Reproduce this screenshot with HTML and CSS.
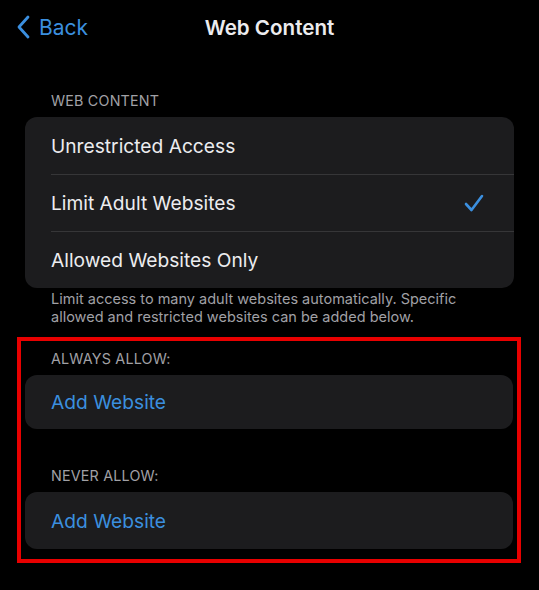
FILE: index.html
```html
<!DOCTYPE html>
<html>
<head>
<meta charset="utf-8">
<link rel="stylesheet" href="styles.css">
</head>
<body>
<div class="nav">
  <div class="back">
    <svg class="chev" width="14" height="24" viewBox="0 0 14 24"><path d="M12 2 L3 12 L12 22" fill="none" stroke="#3b8fdf" stroke-width="2.8" stroke-linecap="round" stroke-linejoin="round"/></svg>
    <span>Back</span>
  </div>
  <div class="title">Web Content</div>
</div>

<div class="sec-head first">WEB CONTENT</div>
<div class="card">
  <div class="row"><span>Unrestricted Access</span></div>
  <div class="row"><span>Limit Adult Websites</span>
    <svg class="check" width="20" height="18" viewBox="0 0 20 18"><path d="M2 10 L7.5 16 L18 2" fill="none" stroke="#3b8fdf" stroke-width="2.6" stroke-linecap="round" stroke-linejoin="round"/></svg>
  </div>
  <div class="row"><span>Allowed Websites Only</span></div>
</div>
<div class="foot">Limit access to many adult websites automatically. Specific allowed and restricted websites can be added below.</div>

<div class="highlight">
  <div class="sec-head">ALWAYS ALLOW:</div>
  <div class="card"><div class="row link short">Add Website</div></div>
  <div class="sec-head never">NEVER ALLOW:</div>
  <div class="card"><div class="row link">Add Website</div></div>
</div>
</body>
</html>
```

FILE: styles.css
```css
* { box-sizing: border-box; }
html, body { margin: 0; padding: 0; background: #000; }
body {
  font-family: Inter, "Noto Sans", sans-serif;
  color: #ececef;
  width: 539px;
  height: 590px;
  overflow: hidden;
}
.nav {
  position: relative;
  height: 54px;
  display: flex;
  align-items: center;
}
.back {
  display: flex;
  align-items: center;
  gap: 9px;
  padding-left: 16px;
  color: #3b8fdf;
  font-size: 21px;
}
.chev { display: block; }
.title {
  position: absolute;
  left: 0; right: 0; top: 0; bottom: 0;
  display: flex;
  align-items: center;
  justify-content: center;
  font-size: 20.6px;
  font-weight: 600;
  pointer-events: none;
}
.sec-head {
  font-size: 14.3px;
  color: #a1a1a6;
  padding-left: 51px;
  letter-spacing: 0.2px;
}
.sec-head.first { margin-top: 38px; height: 25px; }
.card {
  margin: 0 25px;
  background: #1c1c1e;
  border-radius: 12px;
  overflow: hidden;
}
.row {
  height: 57px;
  display: flex;
  align-items: center;
  justify-content: space-between;
  padding: 0 30px 0 26px;
  font-size: 19.2px;
  position: relative;
}
.row + .row::before {
  content: "";
  position: absolute;
  top: 0; left: 26px; right: 0;
  height: 1px;
  background: #363638;
}
.check { display: block; }
.foot {
  font-size: 14.5px;
  line-height: 18px;
  color: #a1a1a6;
  padding: 2px 40px 0 51px;
}
.highlight {
  margin: 11px 18px 0 17px;
  border: 4px solid #e80000;
  padding: 0 4px 10px 4px;
}
.highlight .sec-head {
  padding-left: 26px;
  height: 34px;
  display: flex;
  align-items: center;
  margin-top: 0;
}
.highlight .sec-head.never {
  height: 63px;
  align-items: flex-end;
  padding-bottom: 8px;
}
.highlight .card { margin: 0; }
.link { color: #3b8fdf; }
.short { height: 54px; }
```
